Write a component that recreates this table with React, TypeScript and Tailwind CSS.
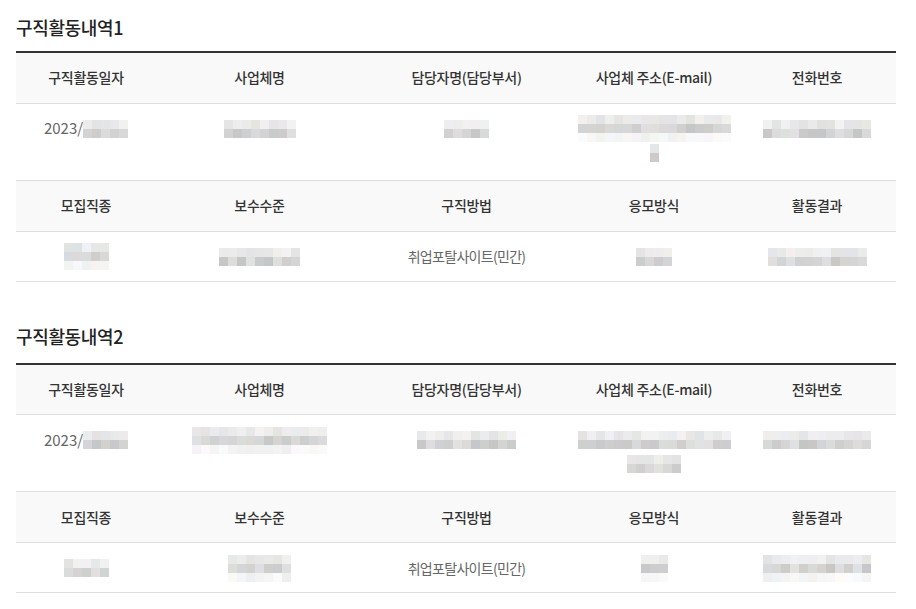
import React from 'react';

// pixelated placeholder used for the masked personal data
function makeRand(seed: number) {
  let s = seed;
  return () => {
    s = (s * 9301 + 49297) % 233280;
    return s / 233280;
  };
}

const ranges: Record<string, [number, number]> = {
  vlight: [238, 252],
  light: [226, 242],
  dark: [198, 226],
};

function Blur({ cols, rows, seed }: { cols: number; rows: number; seed: number }) {
  const r = makeRand(seed);
  const profile = rows === 1 ? ['light'] : rows === 2 ? ['light', 'dark'] : ['light', 'dark', 'vlight'];
  return (
    <div className="inline-flex flex-col shrink-0 align-middle">
      {profile.map((p, i) => (
        <div key={i} className="flex">
          {Array.from({ length: cols }).map((_, j) => {
            const [lo, hi] = ranges[p];
            const v = Math.round(lo + r() * (hi - lo));
            const tr = Math.round(v + (r() - 0.5) * 6);
            const tb = Math.round(v + (r() - 0.5) * 8);
            return (
              <div
                key={j}
                className="w-[9px] h-[9px]"
                style={{ backgroundColor: `rgb(${Math.min(255, tr)},${v},${Math.min(255, tb)})` }}
              />
            );
          })}
        </div>
      ))}
    </div>
  );
}

type Cell = { text?: string; blur?: [number, number, number]; lines?: [number, number, number][] };

function Line({ children }: { children: React.ReactNode }) {
  return <div className="h-6 flex items-center justify-center whitespace-nowrap">{children}</div>;
}

function DataCell({ cell }: { cell: Cell }) {
  const isDate = cell.text === '2023/';
  return (
    <td className="border-b border-[#dedede] text-center align-top px-2 pt-[13px]">
      {cell.lines ? (
        cell.lines.map((b, i) => (
          <Line key={i}>
            <Blur cols={b[0]} rows={b[1]} seed={b[2]} />
          </Line>
        ))
      ) : (
        <Line>
          {cell.text && (
            <span className={isDate ? 'text-[15px] tracking-normal' : 'tracking-[-0.05em]'}>{cell.text}</span>
          )}
          {cell.blur && <Blur cols={cell.blur[0]} rows={cell.blur[1]} seed={cell.blur[2]} />}
        </Line>
      )}
    </td>
  );
}

function HeadRow({ labels }: { labels: string[] }) {
  return (
    <tr className="h-[51px]">
      {labels.map((l) => (
        <th
          key={l}
          className="bg-[#f9f9f9] border-b border-[#dedede] font-medium text-[#333] text-center tracking-[-0.02em]"
        >
          {l}
        </th>
      ))}
    </tr>
  );
}

const head1 = ['구직활동일자', '사업체명', '담당자명(담당부서)', '사업체 주소(E-mail)', '전화번호'];
const head2 = ['모집직종', '보수수준', '구직방법', '응모방식', '활동결과'];

const records: { title: string; row1: Cell[]; row2: Cell[] }[] = [
  {
    title: '구직활동내역1',
    row1: [
      { text: '2023/', blur: [5, 2, 11] },
      { blur: [8, 2, 23] },
      { blur: [5, 2, 37] },
      { lines: [[17, 3, 41], [1, 2, 53]] },
      { blur: [12, 2, 67] },
    ],
    row2: [
      { blur: [5, 3, 71] },
      { blur: [9, 2, 83] },
      { text: '취업포탈사이트(민간)' },
      { blur: [4, 2, 97] },
      { blur: [11, 2, 101] },
    ],
  },
  {
    title: '구직활동내역2',
    row1: [
      { text: '2023/', blur: [5, 2, 113] },
      { blur: [15, 3, 127] },
      { blur: [11, 2, 131] },
      { lines: [[17, 2, 149], [6, 2, 151]] },
      { blur: [12, 2, 163] },
    ],
    row2: [
      { blur: [5, 2, 173] },
      { blur: [7, 3, 181] },
      { text: '취업포탈사이트(민간)' },
      { blur: [3, 3, 191] },
      { blur: [12, 3, 199] },
    ],
  },
];

function Record({ title, row1, row2, first }: { title: string; row1: Cell[]; row2: Cell[]; first: boolean }) {
  return (
    <section className={first ? 'pt-[14px]' : 'pt-[41px]'}>
      <h2
        className={`text-[18px] leading-[26px] font-medium text-[#222] tracking-[-0.02em] ${
          first ? 'mb-[11px]' : 'mb-[14px]'
        }`}
      >
        {title}
      </h2>
      <table className="w-full table-fixed border-collapse border-t-2 border-[#333] text-[14px]">
        <colgroup>
          <col className="w-[140px]" />
          <col className="w-[207px]" />
          <col className="w-[207px]" />
          <col className="w-[168px]" />
          <col />
        </colgroup>
        <tbody>
          <HeadRow labels={head1} />
          <tr className="h-[77px] text-[#666]">
            {row1.map((c, i) => (
              <DataCell key={i} cell={c} />
            ))}
          </tr>
          <HeadRow labels={head2} />
          <tr className="h-[50px] text-[#666]">
            {row2.map((c, i) => (
              <DataCell key={i} cell={c} />
            ))}
          </tr>
        </tbody>
      </table>
    </section>
  );
}

export default function App() {
  return (
    <div className="min-h-screen bg-white pl-4 pr-5 font-['Noto_Sans_CJK_KR','Noto_Sans',sans-serif]">
      {records.map((r, i) => (
        <Record key={r.title} title={r.title} row1={r.row1} row2={r.row2} first={i === 0} />
      ))}
    </div>
  );
}
